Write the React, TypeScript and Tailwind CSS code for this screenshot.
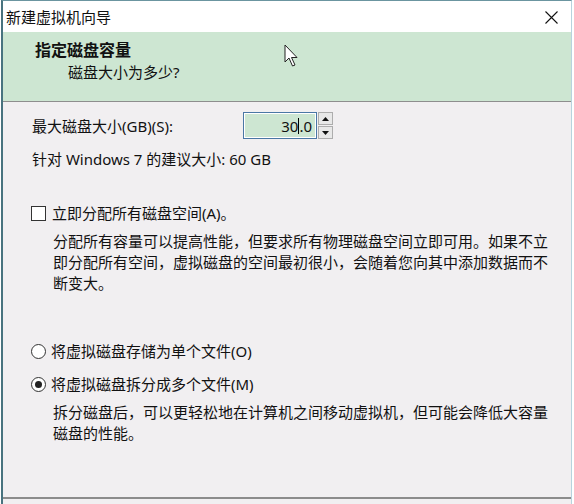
import React from 'react';

const font = { fontFamily: "'Noto Sans', 'Noto Sans CJK SC', sans-serif" };

function Checkbox() {
  return <span className="w-[15px] h-[15px] border border-[#333] bg-white shrink-0" />;
}

function Radio({ checked }: { checked?: boolean }) {
  return <span className="w-[15px] h-[15px] rounded-full border border-[#333] bg-white shrink-0 flex items-center justify-center">
      {checked && <span className="w-[7px] h-[7px] rounded-full bg-[#222]" />}
    </span>;
}

function Spinner() {
  return <div className="flex flex-col w-[15px] h-[27px] ml-[1px]">
      <div className="h-[13px] border border-[#adadad] bg-[#e8e8e8] flex items-center justify-center">
        <svg width="7" height="4" viewBox="0 0 7 4"><path d="M0 4 L3.5 0 L7 4 Z" fill="#111" /></svg>
      </div>
      <div className="h-[13px] mt-[1px] border border-[#adadad] bg-[#e8e8e8] flex items-center justify-center">
        <svg width="7" height="4" viewBox="0 0 7 4"><path d="M0 0 L3.5 4 L7 0 Z" fill="#111" /></svg>
      </div>
    </div>;
}

export default function App() {
  return <div className="w-[574px] h-[504px] overflow-hidden bg-white relative text-[15px] text-[#111]" style={font}>
      <div className="ml-[1px] w-[571px] h-full flex flex-col border-l-2 border-l-[#48737f] border-t border-t-[#6b95a0] border-r border-r-[#b7d3de]">
        {/* Title bar */}
        <div className="h-[31px] bg-white flex items-center justify-between pl-[3px] pr-[13px]">
          <span className="leading-[20px]">新建虚拟机向导</span>
          <svg width="13" height="13" viewBox="0 0 13 13" className="mt-[1px]">
            <path d="M0.5 0.5 L12.5 12.5 M12.5 0.5 L0.5 12.5" stroke="#111" strokeWidth="1.1" />
          </svg>
        </div>

        {/* Header */}
        <div className="h-[70px] bg-[#cde6d2] border-b border-[#8e8e8e] pl-[32px] pt-[8px]">
          <div className="font-bold text-[16px] leading-[20px]">指定磁盘容量</div>
          <div className="pl-[33px] mt-[2px] leading-[20px]">磁盘大小为多少?</div>
        </div>

        {/* Body */}
        <div className="flex-1 bg-[#f1eff1] flex flex-col">
          <div className="mt-[10px] h-[27px] flex items-center pl-[29px]">
            <span className="w-[211px] leading-[20px]">最大磁盘大小(GB)(S):</span>
            <div className="w-[74px] h-[27px] border border-[#4a77a5] bg-white p-[1px]">
              <div className="h-full bg-[#cde6d2] flex items-center justify-end pr-[3px] leading-[20px]">
                <span>30</span>
                <span className="w-[1px] h-[16px] bg-black" />
                <span>.0</span>
              </div>
            </div>
            <Spinner />
          </div>

          <div className="mt-[10px] pl-[29px] leading-[20px]">针对 Windows 7 的建议大小: 60 GB</div>

          <div className="mt-[34px] pl-[28px] flex items-center gap-[6px] leading-[20px]">
            <Checkbox />
            <span>立即分配所有磁盘空间(A)。</span>
          </div>

          <p className="mt-[8px] ml-[50px] w-[496px] leading-[21px]">
            分配所有容量可以提高性能，但要求所有物理磁盘空间立即可用。如果不立即分配所有空间，虚拟磁盘的空间最初很小，会随着您向其中添加数据而不断变大。
          </p>

          <div className="mt-[47px] pl-[28px] flex items-center gap-[5px] leading-[20px]">
            <Radio />
            <span>将虚拟磁盘存储为单个文件(O)</span>
          </div>

          <div className="mt-[13px] pl-[28px] flex items-center gap-[5px] leading-[20px]">
            <Radio checked />
            <span>将虚拟磁盘拆分成多个文件(M)</span>
          </div>

          <p className="mt-[8px] ml-[50px] w-[496px] leading-[21px]">
            拆分磁盘后，可以更轻松地在计算机之间移动虚拟机，但可能会降低大容量磁盘的性能。
          </p>

          <div className="flex-1" />
          <div className="h-[7px] border-t-2 border-[#8c8c8c] bg-[#f1eff1]" />
        </div>
      </div>

      {/* Mouse pointer */}
      <svg width="16" height="25" viewBox="0 0 16 25" className="absolute left-[284px] top-[44px]">
        <path d="M1 1 L1 18 L5 14 L8.5 22 L11 21 L7.5 13.5 L13 13.5 Z" fill="white" stroke="#222" strokeWidth="1" strokeLinejoin="round" />
      </svg>
    </div>;
}
